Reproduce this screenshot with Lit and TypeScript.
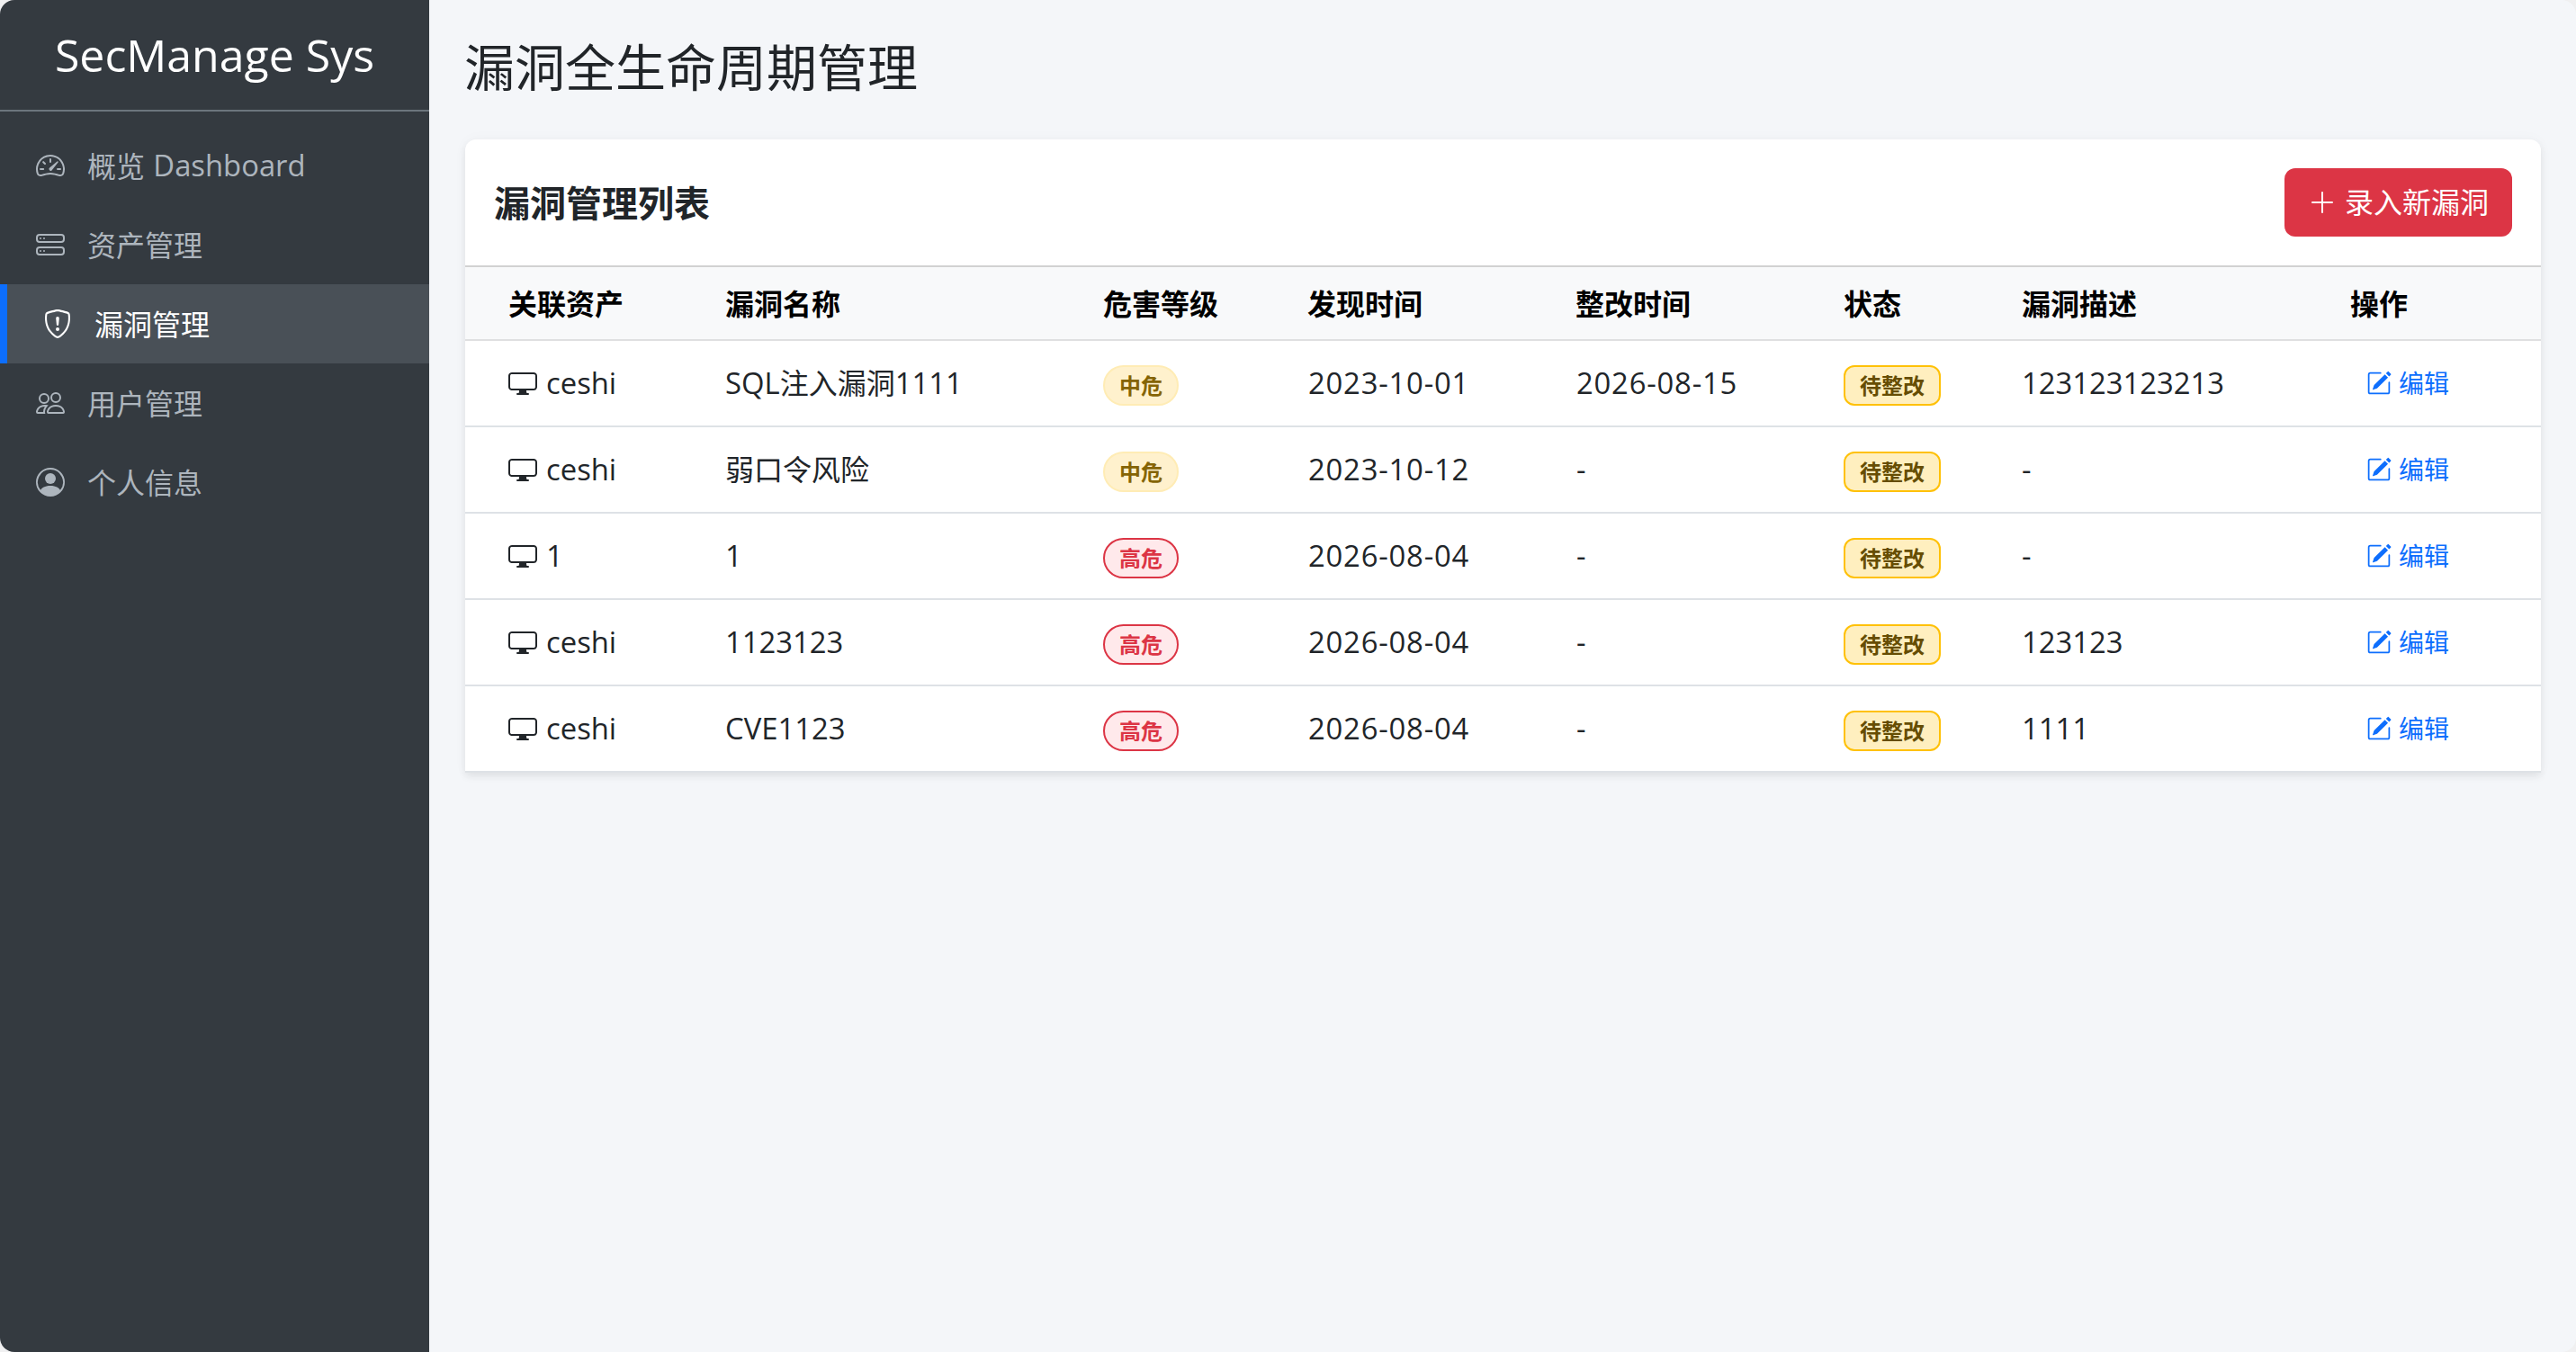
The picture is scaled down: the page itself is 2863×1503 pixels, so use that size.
import { LitElement, html, css, svg } from "lit";
import { customElement, property } from "lit/decorators.js";

const ICONS: Record<string, string[]> = {
  speedometer: [
    "M8 4a.5.5 0 0 1 .5.5V6a.5.5 0 0 1-1 0V4.5A.5.5 0 0 1 8 4M3.732 5.732a.5.5 0 0 1 .707 0l.915.914a.5.5 0 1 1-.708.708l-.914-.915a.5.5 0 0 1 0-.707M2 10a.5.5 0 0 1 .5-.5h1.586a.5.5 0 0 1 0 1H2.5A.5.5 0 0 1 2 10m9.5 0a.5.5 0 0 1 .5-.5h1.5a.5.5 0 0 1 0 1H12a.5.5 0 0 1-.5-.5m.754-4.246a.39.39 0 0 0-.527-.02L7.547 9.31a.91.91 0 1 0 1.302 1.258l3.434-4.297a.39.39 0 0 0-.029-.518z",
    "M0 10a8 8 0 1 1 15.547 2.661c-.442 1.253-1.845 1.602-2.932 1.25C11.309 13.488 9.475 13 8 13c-1.474 0-3.31.488-4.615.911-1.087.352-2.49.003-2.932-1.25A8 8 0 0 1 0 10m8-7a7 7 0 0 0-6.603 9.329c.203.575.923.876 1.68.63C4.397 12.533 6.358 12 8 12s3.604.532 4.923.96c.757.245 1.477-.056 1.68-.631A7 7 0 0 0 8 3",
  ],
  stack: [
    "M14 10a1 1 0 0 1 1 1v1a1 1 0 0 1-1 1H2a1 1 0 0 1-1-1v-1a1 1 0 0 1 1-1zM2 9a2 2 0 0 0-2 2v1a2 2 0 0 0 2 2h12a2 2 0 0 0 2-2v-1a2 2 0 0 0-2-2z",
    "M5 11.5a.5.5 0 1 1-1 0 .5.5 0 0 1 1 0m-2 0a.5.5 0 1 1-1 0 .5.5 0 0 1 1 0",
    "M14 3a1 1 0 0 1 1 1v1a1 1 0 0 1-1 1H2a1 1 0 0 1-1-1V4a1 1 0 0 1 1-1zM2 2a2 2 0 0 0-2 2v1a2 2 0 0 0 2 2h12a2 2 0 0 0 2-2V4a2 2 0 0 0-2-2z",
    "M5 4.5a.5.5 0 1 1-1 0 .5.5 0 0 1 1 0m-2 0a.5.5 0 1 1-1 0 .5.5 0 0 1 1 0",
  ],
  shield: [
    "M5.338 1.59a61 61 0 0 0-2.837.856.48.48 0 0 0-.328.39c-.554 4.157.726 7.19 2.253 9.188a10.7 10.7 0 0 0 2.287 2.233c.346.244.652.42.893.533q.18.085.293.118a1 1 0 0 0 .101.025 1 1 0 0 0 .1-.025q.114-.034.294-.118c.24-.113.547-.29.893-.533a10.7 10.7 0 0 0 2.287-2.233c1.527-1.997 2.807-5.031 2.253-9.188a.48.48 0 0 0-.328-.39c-.651-.213-1.75-.56-2.837-.855C9.552 1.29 8.531 1.067 8 1.067c-.53 0-1.552.223-2.662.524zM5.072.56C6.157.265 7.31 0 8 0s1.843.265 2.928.56c1.11.3 2.229.655 2.887.87a1.54 1.54 0 0 1 1.044 1.262c.596 4.477-.787 7.795-2.465 9.99a11.8 11.8 0 0 1-2.517 2.453 7 7 0 0 1-1.048.625c-.28.132-.581.24-.829.24s-.548-.108-.829-.24a7 7 0 0 1-1.048-.625 11.8 11.8 0 0 1-2.517-2.453C1.928 10.487.545 7.169 1.141 2.692A1.54 1.54 0 0 1 2.185 1.43 63 63 0 0 1 5.072.56",
    "M7.001 11a1 1 0 1 1 2 0 1 1 0 0 1-2 0M7.1 4.995a.905.905 0 1 1 1.8 0l-.35 3.507a.553.553 0 0 1-1.1 0z",
  ],
  people: [
    "M15 14s1 0 1-1-1-4-5-4-5 3-5 4 1 1 1 1zm-7.978-1L7 12.996c.001-.264.167-1.03.76-1.72C8.312 10.629 9.282 10 11 10c1.717 0 2.687.63 3.24 1.276.593.69.758 1.457.76 1.72l-.008.002-.014.002zM11 7a2 2 0 1 0 0-4 2 2 0 0 0 0 4m3-2a3 3 0 1 1-6 0 3 3 0 0 1 6 0M6.936 9.28a6 6 0 0 0-1.23-.247A7 7 0 0 0 5 9c-4 0-5 3-5 4q0 1 1 1h4.216A2.24 2.24 0 0 1 5 13c0-1.01.377-2.042 1.09-2.904.243-.294.526-.569.846-.816M4.92 10A5.5 5.5 0 0 0 4 13H1c0-.26.164-1.03.76-1.724.545-.636 1.492-1.256 3.16-1.275ZM1.5 5.5a3 3 0 1 1 6 0 3 3 0 0 1-6 0m3-2a2 2 0 1 0 0 4 2 2 0 0 0 0-4",
  ],
  person: [
    "M11 6a3 3 0 1 1-6 0 3 3 0 0 1 6 0",
    "M0 8a8 8 0 1 1 16 0A8 8 0 0 1 0 8m8-7a7 7 0 0 0-5.468 11.37C3.242 11.226 4.805 10 8 10s4.757 1.225 5.468 2.37A7 7 0 0 0 8 1",
  ],
  display: [
    "M0 4s0-2 2-2h12s2 0 2 2v6s0 2-2 2h-4q0 1 .25 1.5H11a.5.5 0 0 1 0 1H5a.5.5 0 0 1 0-1h.75Q6 13 6 12H2s-2 0-2-2zm1.398-.855a.76.76 0 0 0-.254.302A1.5 1.5 0 0 0 1 4.01V10c0 .325.078.502.145.602q.105.156.302.254a1.5 1.5 0 0 0 .538.143L2.01 11H14c.325 0 .502-.078.602-.145a.76.76 0 0 0 .254-.302 1.5 1.5 0 0 0 .143-.538L15 9.99V4c0-.325-.078-.502-.145-.602a.76.76 0 0 0-.302-.254A1.5 1.5 0 0 0 13.99 3H2c-.325 0-.502.078-.602.145",
  ],
  pencil: [
    "M15.502 1.94a.5.5 0 0 1 0 .706L14.459 3.69l-2-2L13.502.646a.5.5 0 0 1 .707 0l1.293 1.293zm-1.75 2.456-2-2L4.939 9.21a.5.5 0 0 0-.121.196l-.805 2.414a.25.25 0 0 0 .316.316l2.414-.805a.5.5 0 0 0 .196-.12l6.813-6.814z",
    "M1 13.5A1.5 1.5 0 0 0 2.5 15h11a1.5 1.5 0 0 0 1.5-1.5v-6a.5.5 0 0 0-1 0v6a.5.5 0 0 1-.5.5h-11a.5.5 0 0 1-.5-.5v-11a.5.5 0 0 1 .5-.5H9a.5.5 0 0 0 0-1H2.5A1.5 1.5 0 0 0 1 2.5z",
  ],
  plus: [
    "M8 2a.5.5 0 0 1 .5.5v5h5a.5.5 0 0 1 0 1h-5v5a.5.5 0 0 1-1 0v-5h-5a.5.5 0 0 1 0-1h5v-5A.5.5 0 0 1 8 2",
  ],
};

@customElement("app-icon")
export class AppIcon extends LitElement {
  static styles = css`
    :host {
      display: block;
      flex: none;
      width: 1em;
      height: 1em;
    }
    .glyph {
      display: block;
      width: 100%;
      height: 100%;
      fill: currentColor;
    }
  `;
  @property() name = "";
  render() {
    return html`<svg class="glyph" viewBox="0 0 16 16">
      ${(ICONS[this.name] ?? []).map((d) => svg`<path fill-rule="evenodd" d=${d}></path>`)}
    </svg>`;
  }
}

/* Latin runs are set slightly larger than the Chinese text beside them. */
const mixed = (text: string) =>
  text
    .split(/([\x21-\x7e]+)/)
    .filter((part) => part !== "")
    .map((part) => (/^[\x21-\x7e]/.test(part) ? html`<span class="latin">${part}</span>` : part));

interface Vulnerability {
  asset: string;
  title: string;
  level: "中危" | "高危";
  found: string;
  fixed: string;
  status: string;
  note: string;
}

const NAV = [
  { icon: "speedometer", label: "概览 Dashboard" },
  { icon: "stack", label: "资产管理" },
  { icon: "shield", label: "漏洞管理", active: true },
  { icon: "people", label: "用户管理" },
  { icon: "person", label: "个人信息" },
];

const COLUMNS = ["关联资产", "漏洞名称", "危害等级", "发现时间", "整改时间", "状态", "漏洞描述", "操作"];

const ROWS: Vulnerability[] = [
  { asset: "ceshi", title: "SQL注入漏洞1111", level: "中危", found: "2023-10-01", fixed: "2026-08-15", status: "待整改", note: "123123123213" },
  { asset: "ceshi", title: "弱口令风险", level: "中危", found: "2023-10-12", fixed: "-", status: "待整改", note: "-" },
  { asset: "1", title: "1", level: "高危", found: "2026-08-04", fixed: "-", status: "待整改", note: "-" },
  { asset: "ceshi", title: "1123123", level: "高危", found: "2026-08-04", fixed: "-", status: "待整改", note: "123123" },
  { asset: "ceshi", title: "CVE1123", level: "高危", found: "2026-08-04", fixed: "-", status: "待整改", note: "1111" },
];

@customElement("app-root")
export class AppRoot extends LitElement {
  static styles = css`
    :host {
      display: block;
      height: 100vh;
      background: #f0f0f1;
      color: #212529;
      font: 400 32px/48px "Open Sans", "Noto Sans CJK SC", sans-serif;
    }
    * {
      box-sizing: border-box;
    }
    .latin {
      font-size: 1.025em;
      line-height: 1;
    }
    .window {
      display: flex;
      height: 100%;
      border-radius: 16px;
      overflow: hidden;
      background: #f4f6f9;
    }
    .sidebar {
      flex: none;
      width: 477px;
      background: #343a40;
      color: #adb5bd;
    }
    .brand {
      display: flex;
      align-items: center;
      justify-content: center;
      height: 124px;
      padding-bottom: 1px;
      border-bottom: 2px solid #6c757d;
      color: #fff;
      font-size: 50px;
    }
    .nav {
      padding-top: 16px;
    }
    .item {
      display: flex;
      align-items: center;
      gap: 25px;
      height: 88px;
      padding-left: 40px;
      white-space: pre;
    }
    .label {
      padding-top: 2px;
    }
    .label .latin {
      margin-left: 1px;
      vertical-align: 1px;
    }
    .item.active {
      border-left: 8px solid #0d6efd;
      background: #495057;
      color: #fff;
    }
    .main {
      flex: 1;
      min-width: 0;
      padding: 41px 39px 0 40px;
    }
    .heading {
      margin: 0 0 47px -1px;
      font-size: 56px;
      font-weight: 400;
      line-height: 67px;
    }
    .card {
      border-radius: 12px 12px 0 0;
      background: #fff;
      box-shadow: 0 4px 8px rgba(0, 0, 0, 0.075), 0 0 16px rgba(0, 0, 0, 0.03);
    }
    .card-head {
      display: flex;
      align-items: center;
      justify-content: space-between;
      height: 142px;
      padding: 0 32px;
      border-bottom: 2px solid #d2d2d2;
    }
    .card-title {
      margin: 0;
      padding-top: 2px;
      font-size: 40px;
      font-weight: 700;
    }
    .add {
      display: flex;
      align-items: center;
      gap: 9px;
      height: 76px;
      padding: 0 26px;
      border: 0;
      border-radius: 12px;
      background: #dc3545;
      color: #fff;
      font: inherit;
    }
    .table {
      width: 100%;
      table-layout: fixed;
      border-collapse: separate;
      border-spacing: 0;
    }
    .c0 { width: 273px; }
    .c1 { width: 420px; }
    .c2 { width: 227px; }
    .c3 { width: 298px; }
    .c4 { width: 298px; }
    .c5 { width: 198px; }
    .c6 { width: 365px; }
    .th,
    .td {
      padding: 0 16px;
      text-align: left;
      white-space: nowrap;
      border-bottom: 2px solid #dee2e6;
    }
    .th:first-child,
    .td:first-child {
      padding-left: 48px;
    }
    .th {
      height: 82px;
      padding-top: 1px;
      background: #f8f9fa;
      color: #000;
      font-weight: 700;
      border-bottom-color: #dfe0e1;
    }
    .td {
      height: 96px;
    }
    .date {
      padding-left: 17px;
      letter-spacing: 0.8px;
    }
    .asset,
    .edit {
      display: flex;
      align-items: center;
      gap: 10px;
    }
    .edit {
      gap: 8px;
      padding-left: 18px;
      color: #0d6efd;
      font-size: 28px;
    }
    .badge {
      display: flex;
      align-items: center;
      width: fit-content;
      height: 45px;
      margin-top: 5px;
      padding: 0 16px;
      border: 2px solid;
      border-radius: 12px;
      font-size: 24px;
      font-weight: 700;
      line-height: 24px;
    }
    .level {
      border-radius: 22.5px;
    }
    .mid {
      border-color: #ffecb5;
      background: #fff1cd;
      color: #856404;
    }
    .high {
      border-color: #dc3545;
      background: #ffe9eb;
      color: #dc3545;
    }
    .status {
      border-color: #ffc107;
      background: #ffefbf;
      color: #664d03;
    }
  `;

  private row(v: Vulnerability) {
    return html`<tr>
      <td class="td"><div class="asset"><app-icon name="display"></app-icon><span>${mixed(v.asset)}</span></div></td>
      <td class="td">${mixed(v.title)}</td>
      <td class="td"><span class="badge level ${v.level === "高危" ? "high" : "mid"}">${v.level}</span></td>
      <td class="td date">${mixed(v.found)}</td>
      <td class="td date">${mixed(v.fixed)}</td>
      <td class="td"><span class="badge status">${v.status}</span></td>
      <td class="td">${mixed(v.note)}</td>
      <td class="td"><div class="edit"><app-icon name="pencil"></app-icon><span>编辑</span></div></td>
    </tr>`;
  }

  render() {
    return html`<div class="window">
      <aside class="sidebar">
        <div class="brand">SecManage Sys</div>
        <nav class="nav">
          ${NAV.map(
            (n) => html`<div class="item ${n.active ? "active" : ""}"><app-icon name=${n.icon}></app-icon><span class="label">${mixed(n.label)}</span></div>`
          )}
        </nav>
      </aside>
      <main class="main">
        <h2 class="heading">漏洞全生命周期管理</h2>
        <section class="card">
          <header class="card-head">
            <h5 class="card-title">漏洞管理列表</h5>
            <button class="add"><app-icon name="plus"></app-icon><span>录入新漏洞</span></button>
          </header>
          <table class="table">
            <thead>
              <tr>${COLUMNS.map((c, i) => html`<th class="th c${i}">${c}</th>`)}</tr>
            </thead>
            <tbody>${ROWS.map((r) => this.row(r))}</tbody>
          </table>
        </section>
      </main>
    </div>`;
  }
}
